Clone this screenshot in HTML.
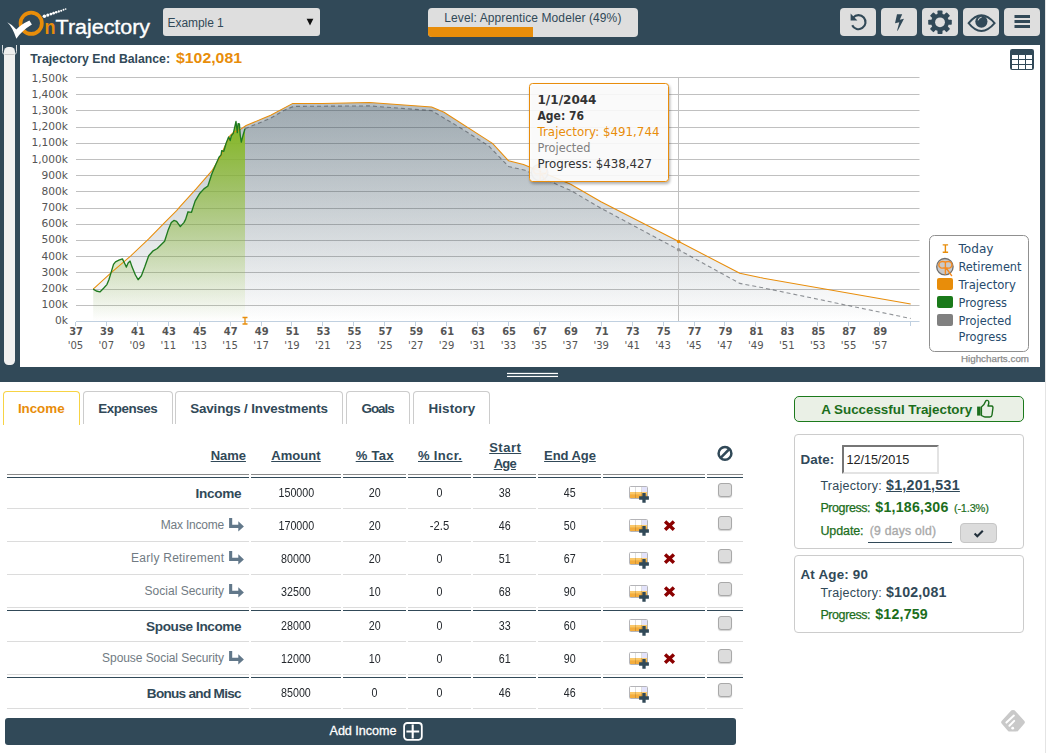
<!DOCTYPE html>
<html lang="en">
<head>
<meta charset="utf-8">
<title>OnTrajectory</title>
<style>
html,body{margin:0;padding:0;}
body{width:1046px;height:753px;overflow:hidden;background:#fff;position:relative;
  font-family:"Liberation Sans",sans-serif;color:#314958;font-size:13px;}
.abs{position:absolute;}
.t{position:absolute;white-space:nowrap;line-height:1;}
#hdr{left:0;top:0;width:1046px;height:382px;background:#314958;}
#panel{left:20px;top:45px;width:1020px;height:322px;background:#fff;}
#edge{left:1045px;top:0;width:1px;height:753px;background:#e4e4e4;}
.hbtn{position:absolute;top:8px;width:36px;height:28px;background:#dedede;border-radius:4px;}
#sel{left:163px;top:8px;width:157px;height:28px;background:#dedede;border-radius:3px;}
#lvl{left:428px;top:8px;width:210px;height:29px;background:#dedede;border-radius:4px;overflow:hidden;}
#lvl i{position:absolute;left:0;top:19px;width:105px;height:10px;background:#e88d0a;}
/* tabs */
.tab{position:absolute;top:391px;height:33px;border:1px solid #ccc;border-bottom:none;border-radius:4px 4px 0 0;background:#fff;box-sizing:border-box;}
.tab span{position:absolute;left:0;right:0;top:10px;text-align:center;font-weight:bold;font-size:13.4px;line-height:16px;white-space:nowrap;}
/* table */
.hl{position:absolute;height:1px;}
.num{position:absolute;text-align:center;font-size:11.5px;letter-spacing:-0.35px;line-height:14px;color:#333;white-space:nowrap;}
.nm{position:absolute;text-align:right;white-space:nowrap;line-height:16px;}
.nm.b{font-weight:bold;font-size:13.6px;color:#314958;}
.nm.s{font-size:12px;color:#777;}
.th{position:absolute;text-align:center;font-weight:bold;font-size:13.2px;line-height:16px;text-decoration:underline;white-space:nowrap;color:#314958;}
.cb{position:absolute;left:718px;width:12px;height:12px;border:1px solid #a9a9a9;border-radius:3px;background:#dcdcdc;box-shadow:0 1px 1px rgba(0,0,0,.18);}
.box{position:absolute;left:794px;width:228px;border:1px solid #ccc;border-radius:4px;background:#fff;}
</style>
</head>
<body>
<div id="hdr" class="abs"></div>
<div id="panel" class="abs"></div>
<svg class="abs" style="left:0;top:0" width="1046" height="382" viewBox="0 0 1046 382">
<defs>
<linearGradient id="gT" x1="0" y1="77" x2="0" y2="321.5" gradientUnits="userSpaceOnUse"><stop offset="0" stop-color="#314958" stop-opacity=".40"/><stop offset="1" stop-color="#314958" stop-opacity="0"/></linearGradient>
<linearGradient id="gJ" x1="0" y1="77" x2="0" y2="321.5" gradientUnits="userSpaceOnUse"><stop offset="0" stop-color="#314958" stop-opacity=".20"/><stop offset="1" stop-color="#314958" stop-opacity="0"/></linearGradient>
<linearGradient id="gP" x1="0" y1="77" x2="0" y2="321.5" gradientUnits="userSpaceOnUse"><stop offset="0" stop-color="#82b71c" stop-opacity="1"/><stop offset=".25" stop-color="#88b82c" stop-opacity=".96"/><stop offset="1" stop-color="#8fb848" stop-opacity="0"/></linearGradient>
<filter id="sh" x="-10%" y="-10%" width="120%" height="125%"><feGaussianBlur in="SourceAlpha" stdDeviation="1.6"/><feOffset dx="1" dy="1.5"/><feComponentTransfer><feFuncA type="linear" slope=".35"/></feComponentTransfer><feMerge><feMergeNode/><feMergeNode in="SourceGraphic"/></feMerge></filter>
</defs>
<path d="M76 305.5H919.5" stroke="#c0c0c0" stroke-width="1"/>
<path d="M76 289.5H919.5" stroke="#c0c0c0" stroke-width="1"/>
<path d="M76 272.5H919.5" stroke="#c0c0c0" stroke-width="1"/>
<path d="M76 256.5H919.5" stroke="#c0c0c0" stroke-width="1"/>
<path d="M76 240.5H919.5" stroke="#c0c0c0" stroke-width="1"/>
<path d="M76 224.5H919.5" stroke="#c0c0c0" stroke-width="1"/>
<path d="M76 208.5H919.5" stroke="#c0c0c0" stroke-width="1"/>
<path d="M76 191.5H919.5" stroke="#c0c0c0" stroke-width="1"/>
<path d="M76 175.5H919.5" stroke="#c0c0c0" stroke-width="1"/>
<path d="M76 159.5H919.5" stroke="#c0c0c0" stroke-width="1"/>
<path d="M76 143.5H919.5" stroke="#c0c0c0" stroke-width="1"/>
<path d="M76 127.5H919.5" stroke="#c0c0c0" stroke-width="1"/>
<path d="M76 110.5H919.5" stroke="#c0c0c0" stroke-width="1"/>
<path d="M76 94.5H919.5" stroke="#c0c0c0" stroke-width="1"/>
<path d="M76 77.5H919.5" stroke="#c0c0c0" stroke-width="1"/>
<polygon points="93.2,289.2 111.5,272.4 130.8,255.8 148.7,238.9 164.6,222.6 176.6,210.7 180.0,206.7 195.9,189.2 211.8,170.9 220.7,156.3 224.6,146.7 230.0,135.7 233.5,132.3 240.4,129.4 246.1,125.5 262.8,118.6 270.7,115.3 292.4,103.6 322.2,103.4 369.4,102.4 431.6,106.9 444.0,112.3 492.5,143.4 508.6,160.8 523.5,164.5 540.4,171.6 570.7,184.2 601.0,201.8 678.7,241.5 739.8,273.3 760.0,277.6 910.7,304.0 910.7,321.5 93.2,321.5" fill="url(#gT)"/>
<polygon points="245.0,128.7 262.8,121.5 270.0,118.6 284.9,109.9 293.6,106.4 369.4,105.9 431.6,110.6 461.4,128.5 488.7,145.9 508.6,166.5 525.2,170.3 570.7,190.5 601.0,208.2 678.7,249.8 739.8,283.4 760.0,287.2 910.7,318.5 910.7,321.5 245.0,321.5" fill="url(#gJ)"/>
<polygon points="93.2,289.2 96.3,291.0 99.9,291.9 103.6,288.3 106.9,284.6 108.9,279.7 111.5,271.1 113.5,264.4 115.5,261.8 118.9,260.2 122.4,258.9 124.8,263.8 126.4,267.1 128.1,263.1 130.1,261.1 132.1,267.1 135.4,275.0 138.1,279.7 141.4,275.7 144.7,267.1 148.7,255.8 152.7,251.2 157.3,248.5 164.6,241.2 168.0,230.6 171.3,222.6 173.9,220.4 176.6,221.3 180.3,226.6 183.9,222.6 185.6,219.4 188.0,211.8 191.5,212.3 195.1,201.1 199.9,193.2 203.9,188.9 207.9,186.0 211.8,174.0 215.8,164.5 219.0,157.3 221.1,154.9 221.7,150.6 223.8,151.3 226.2,143.0 228.6,136.9 230.2,140.6 231.3,135.8 233.3,133.4 234.9,126.3 236.0,121.5 237.3,132.6 238.1,123.6 239.4,123.9 240.2,135.0 241.3,142.2 242.9,135.8 245.0,128.7 245.0,321.5 93.2,321.5" fill="url(#gP)"/>
<polyline points="93.2,289.2 111.5,272.4 130.8,255.8 148.7,238.9 164.6,222.6 176.6,210.7 180.0,206.7 195.9,189.2 211.8,170.9 220.7,156.3 224.6,146.7 230.0,135.7 233.5,132.3 240.4,129.4 246.1,125.5 262.8,118.6 270.7,115.3 292.4,103.6 322.2,103.4 369.4,102.4 431.6,106.9 444.0,112.3 492.5,143.4 508.6,160.8 523.5,164.5 540.4,171.6 570.7,184.2 601.0,201.8 678.7,241.5 739.8,273.3 760.0,277.6 910.7,304.0" fill="none" stroke="#e88d0a" stroke-width="1.05" stroke-linejoin="round"/>
<polyline points="245.0,128.7 262.8,121.5 270.0,118.6 284.9,109.9 293.6,106.4 369.4,105.9 431.6,110.6 461.4,128.5 488.7,145.9 508.6,166.5 525.2,170.3 570.7,190.5 601.0,208.2 678.7,249.8 739.8,283.4 760.0,287.2 910.7,318.5" fill="none" stroke="#4a4f55" stroke-opacity=".6" stroke-width="1.1" stroke-dasharray="4 3"/>
<polyline points="93.2,289.2 96.3,291.0 99.9,291.9 103.6,288.3 106.9,284.6 108.9,279.7 111.5,271.1 113.5,264.4 115.5,261.8 118.9,260.2 122.4,258.9 124.8,263.8 126.4,267.1 128.1,263.1 130.1,261.1 132.1,267.1 135.4,275.0 138.1,279.7 141.4,275.7 144.7,267.1 148.7,255.8 152.7,251.2 157.3,248.5 164.6,241.2 168.0,230.6 171.3,222.6 173.9,220.4 176.6,221.3 180.3,226.6 183.9,222.6 185.6,219.4 188.0,211.8 191.5,212.3 195.1,201.1 199.9,193.2 203.9,188.9 207.9,186.0 211.8,174.0 215.8,164.5 219.0,157.3 221.1,154.9 221.7,150.6 223.8,151.3 226.2,143.0 228.6,136.9 230.2,140.6 231.3,135.8 233.3,133.4 234.9,126.3 236.0,121.5 237.3,132.6 238.1,123.6 239.4,123.9 240.2,135.0 241.3,142.2 242.9,135.8 245.0,128.7" fill="none" stroke="#1f7a1f" stroke-width="1.35" stroke-linejoin="round"/>
<path d="M76 321.5H919.5" stroke="#c0d0e0" stroke-width="1"/>
<path d="M75.5 322V326M106.5 322V326M137.5 322V326M168.5 322V326M199.5 322V326M230.5 322V326M261.5 322V326M291.5 322V326M322.5 322V326M353.5 322V326M384.5 322V326M415.5 322V326M446.5 322V326M477.5 322V326M508.5 322V326M539.5 322V326M570.5 322V326M601.5 322V326M632.5 322V326M663.5 322V326M694.5 322V326M724.5 322V326M755.5 322V326M786.5 322V326M817.5 322V326M848.5 322V326M879.5 322V326M910.5 322V326" stroke="#c0d0e0" stroke-width="1"/>
<path d="M678.5 77V321" stroke="#c0c0c0" stroke-width="1"/>
<circle cx="678.6" cy="241.5" r="1.8" fill="#e88d0a"/><circle cx="678.6" cy="249.8" r="1.8" fill="#999"/>
<g font-family="DejaVu Sans, Liberation Sans, sans-serif" font-size="11" fill="#555" text-anchor="end">
<text x="68" y="324" textLength="13" lengthAdjust="spacingAndGlyphs">0k</text>
<text x="68" y="308" textLength="26.5" lengthAdjust="spacingAndGlyphs">100k</text>
<text x="68" y="292" textLength="26.5" lengthAdjust="spacingAndGlyphs">200k</text>
<text x="68" y="276" textLength="26.5" lengthAdjust="spacingAndGlyphs">300k</text>
<text x="68" y="260" textLength="26.5" lengthAdjust="spacingAndGlyphs">400k</text>
<text x="68" y="243" textLength="26.5" lengthAdjust="spacingAndGlyphs">500k</text>
<text x="68" y="227" textLength="26.5" lengthAdjust="spacingAndGlyphs">600k</text>
<text x="68" y="211" textLength="26.5" lengthAdjust="spacingAndGlyphs">700k</text>
<text x="68" y="195" textLength="26.5" lengthAdjust="spacingAndGlyphs">800k</text>
<text x="68" y="179" textLength="26.5" lengthAdjust="spacingAndGlyphs">900k</text>
<text x="68" y="163" textLength="36.6" lengthAdjust="spacingAndGlyphs">1,000k</text>
<text x="68" y="146" textLength="36.6" lengthAdjust="spacingAndGlyphs">1,100k</text>
<text x="68" y="130" textLength="36.6" lengthAdjust="spacingAndGlyphs">1,200k</text>
<text x="68" y="114" textLength="36.6" lengthAdjust="spacingAndGlyphs">1,300k</text>
<text x="68" y="98" textLength="36.6" lengthAdjust="spacingAndGlyphs">1,400k</text>
<text x="68" y="82" textLength="36.6" lengthAdjust="spacingAndGlyphs">1,500k</text>
</g>
<g font-family="DejaVu Sans, Liberation Sans, sans-serif" font-size="11" fill="#555" text-anchor="middle">
<text x="76.1" y="335.2" font-weight="bold" textLength="13.8" lengthAdjust="spacingAndGlyphs">37</text><text x="75.5" y="349.2" textLength="15.6" lengthAdjust="spacingAndGlyphs">&#39;05</text>
<text x="107.0" y="335.2" font-weight="bold" textLength="13.8" lengthAdjust="spacingAndGlyphs">39</text><text x="106.4" y="349.2" textLength="15.6" lengthAdjust="spacingAndGlyphs">&#39;07</text>
<text x="138.0" y="335.2" font-weight="bold" textLength="13.8" lengthAdjust="spacingAndGlyphs">41</text><text x="137.4" y="349.2" textLength="15.6" lengthAdjust="spacingAndGlyphs">&#39;09</text>
<text x="168.9" y="335.2" font-weight="bold" textLength="13.8" lengthAdjust="spacingAndGlyphs">43</text><text x="168.3" y="349.2" textLength="15.6" lengthAdjust="spacingAndGlyphs">&#39;11</text>
<text x="199.8" y="335.2" font-weight="bold" textLength="13.8" lengthAdjust="spacingAndGlyphs">45</text><text x="199.2" y="349.2" textLength="15.6" lengthAdjust="spacingAndGlyphs">&#39;13</text>
<text x="230.7" y="335.2" font-weight="bold" textLength="13.8" lengthAdjust="spacingAndGlyphs">47</text><text x="230.1" y="349.2" textLength="15.6" lengthAdjust="spacingAndGlyphs">&#39;15</text>
<text x="261.7" y="335.2" font-weight="bold" textLength="13.8" lengthAdjust="spacingAndGlyphs">49</text><text x="261.1" y="349.2" textLength="15.6" lengthAdjust="spacingAndGlyphs">&#39;17</text>
<text x="292.6" y="335.2" font-weight="bold" textLength="13.8" lengthAdjust="spacingAndGlyphs">51</text><text x="292.0" y="349.2" textLength="15.6" lengthAdjust="spacingAndGlyphs">&#39;19</text>
<text x="323.5" y="335.2" font-weight="bold" textLength="13.8" lengthAdjust="spacingAndGlyphs">53</text><text x="322.9" y="349.2" textLength="15.6" lengthAdjust="spacingAndGlyphs">&#39;21</text>
<text x="354.4" y="335.2" font-weight="bold" textLength="13.8" lengthAdjust="spacingAndGlyphs">55</text><text x="353.8" y="349.2" textLength="15.6" lengthAdjust="spacingAndGlyphs">&#39;23</text>
<text x="385.4" y="335.2" font-weight="bold" textLength="13.8" lengthAdjust="spacingAndGlyphs">57</text><text x="384.8" y="349.2" textLength="15.6" lengthAdjust="spacingAndGlyphs">&#39;25</text>
<text x="416.3" y="335.2" font-weight="bold" textLength="13.8" lengthAdjust="spacingAndGlyphs">59</text><text x="415.7" y="349.2" textLength="15.6" lengthAdjust="spacingAndGlyphs">&#39;27</text>
<text x="447.2" y="335.2" font-weight="bold" textLength="13.8" lengthAdjust="spacingAndGlyphs">61</text><text x="446.6" y="349.2" textLength="15.6" lengthAdjust="spacingAndGlyphs">&#39;29</text>
<text x="478.1" y="335.2" font-weight="bold" textLength="13.8" lengthAdjust="spacingAndGlyphs">63</text><text x="477.5" y="349.2" textLength="15.6" lengthAdjust="spacingAndGlyphs">&#39;31</text>
<text x="509.1" y="335.2" font-weight="bold" textLength="13.8" lengthAdjust="spacingAndGlyphs">65</text><text x="508.5" y="349.2" textLength="15.6" lengthAdjust="spacingAndGlyphs">&#39;33</text>
<text x="540.0" y="335.2" font-weight="bold" textLength="13.8" lengthAdjust="spacingAndGlyphs">67</text><text x="539.4" y="349.2" textLength="15.6" lengthAdjust="spacingAndGlyphs">&#39;35</text>
<text x="570.9" y="335.2" font-weight="bold" textLength="13.8" lengthAdjust="spacingAndGlyphs">69</text><text x="570.3" y="349.2" textLength="15.6" lengthAdjust="spacingAndGlyphs">&#39;37</text>
<text x="601.8" y="335.2" font-weight="bold" textLength="13.8" lengthAdjust="spacingAndGlyphs">71</text><text x="601.2" y="349.2" textLength="15.6" lengthAdjust="spacingAndGlyphs">&#39;39</text>
<text x="632.8" y="335.2" font-weight="bold" textLength="13.8" lengthAdjust="spacingAndGlyphs">73</text><text x="632.2" y="349.2" textLength="15.6" lengthAdjust="spacingAndGlyphs">&#39;41</text>
<text x="663.7" y="335.2" font-weight="bold" textLength="13.8" lengthAdjust="spacingAndGlyphs">75</text><text x="663.1" y="349.2" textLength="15.6" lengthAdjust="spacingAndGlyphs">&#39;43</text>
<text x="694.6" y="335.2" font-weight="bold" textLength="13.8" lengthAdjust="spacingAndGlyphs">77</text><text x="694.0" y="349.2" textLength="15.6" lengthAdjust="spacingAndGlyphs">&#39;45</text>
<text x="725.5" y="335.2" font-weight="bold" textLength="13.8" lengthAdjust="spacingAndGlyphs">79</text><text x="724.9" y="349.2" textLength="15.6" lengthAdjust="spacingAndGlyphs">&#39;47</text>
<text x="756.5" y="335.2" font-weight="bold" textLength="13.8" lengthAdjust="spacingAndGlyphs">81</text><text x="755.9" y="349.2" textLength="15.6" lengthAdjust="spacingAndGlyphs">&#39;49</text>
<text x="787.4" y="335.2" font-weight="bold" textLength="13.8" lengthAdjust="spacingAndGlyphs">83</text><text x="786.8" y="349.2" textLength="15.6" lengthAdjust="spacingAndGlyphs">&#39;51</text>
<text x="818.3" y="335.2" font-weight="bold" textLength="13.8" lengthAdjust="spacingAndGlyphs">85</text><text x="817.7" y="349.2" textLength="15.6" lengthAdjust="spacingAndGlyphs">&#39;53</text>
<text x="849.2" y="335.2" font-weight="bold" textLength="13.8" lengthAdjust="spacingAndGlyphs">87</text><text x="848.6" y="349.2" textLength="15.6" lengthAdjust="spacingAndGlyphs">&#39;55</text>
<text x="880.2" y="335.2" font-weight="bold" textLength="13.8" lengthAdjust="spacingAndGlyphs">89</text><text x="879.6" y="349.2" textLength="15.6" lengthAdjust="spacingAndGlyphs">&#39;57</text>
</g>
<path d="M242.5 317.5h5M245 317.5v6.5M242.5 324h5" stroke="#e88d0a" stroke-width="1.3" fill="none"/>
<g opacity=".7" transform="translate(-405.2 -94.2)"><circle cx="944.9" cy="266.7" r="8.2" fill="#c9c9c9" stroke="#6e6e6e" stroke-width="1.3"/><path d="M945.4 262V274M945.4 262C941 260.5 938.8 262.5 938.8 265C938.8 267.8 942 268.8 945.4 267.6M945.4 262C949.8 260.5 952 262.5 952 265C952 267.8 949 268.8 945.4 267.6M946.2 268L951.6 275.6" fill="none" stroke="#f58a1f" stroke-width="1.4" stroke-linecap="round"/></g>
<g filter="url(#sh)"><rect x="529.5" y="83.5" width="139" height="98" rx="3" fill="#fff" fill-opacity=".86" stroke="#e88d0a" stroke-width="1"/></g>
<g font-family="DejaVu Sans, Liberation Sans, sans-serif" font-size="12" fill="#333">
<text x="537.5" y="104" font-weight="bold" textLength="59" lengthAdjust="spacingAndGlyphs">1/1/2044</text>
<text x="537.5" y="120" font-weight="bold" textLength="46.5" lengthAdjust="spacingAndGlyphs">Age: 76</text>
<text x="537.5" y="136" fill="#e88d0a" textLength="122" lengthAdjust="spacingAndGlyphs">Trajectory: $491,744</text>
<text x="537.5" y="152" fill="#808080" textLength="53" lengthAdjust="spacingAndGlyphs">Projected</text>
<text x="537.5" y="168" textLength="114.5" lengthAdjust="spacingAndGlyphs">Progress: $438,427</text>
</g>
<rect x="929.5" y="235.5" width="99" height="116" rx="5" fill="#fff" stroke="#909090" stroke-width="1"/>
<path d="M942.7 244.9h5.4M945.4 244.9v7.4M942.7 252.3h5.4" stroke="#e88d0a" stroke-width="1.4" fill="none"/>
<circle cx="944.9" cy="266.7" r="8.2" fill="#c9c9c9" stroke="#6e6e6e" stroke-width="1.3"/><path d="M945.4 262V274M945.4 262C941 260.5 938.8 262.5 938.8 265C938.8 267.8 942 268.8 945.4 267.6M945.4 262C949.8 260.5 952 262.5 952 265C952 267.8 949 268.8 945.4 267.6M946.2 268L951.6 275.6" fill="none" stroke="#f58a1f" stroke-width="1.4" stroke-linecap="round"/>
<rect x="937" y="278" width="16" height="12" rx="2" fill="#e88d0a"/>
<rect x="937" y="296" width="16" height="12" rx="2" fill="#1a7a1a"/>
<rect x="937" y="314" width="16" height="12" rx="2" fill="#808080"/>
<g font-family="DejaVu Sans, Liberation Sans, sans-serif" font-size="12" fill="#274b6d">
<text x="958.5" y="253" textLength="35" lengthAdjust="spacingAndGlyphs">Today</text>
<text x="958.5" y="271" textLength="63" lengthAdjust="spacingAndGlyphs">Retirement</text>
<text x="958.5" y="289" textLength="57.5" lengthAdjust="spacingAndGlyphs">Trajectory</text>
<text x="958.5" y="307" textLength="48.5" lengthAdjust="spacingAndGlyphs">Progress</text>
<text x="958.5" y="325" textLength="53" lengthAdjust="spacingAndGlyphs">Projected</text>
<text x="958.5" y="341" textLength="48.5" lengthAdjust="spacingAndGlyphs">Progress</text>
</g>
<text x="1029" y="362" font-family="Liberation Sans, sans-serif" font-size="9.8" fill="#8a8a8a" stroke="#8a8a8a" stroke-width=".25" text-anchor="end">Highcharts.com</text>
<text x="30.3" y="63" font-family="Liberation Sans, sans-serif" font-size="12.6" font-weight="bold" fill="#314958" textLength="139.7" lengthAdjust="spacingAndGlyphs">Trajectory End Balance:</text>
<text x="176" y="63" font-family="Liberation Sans, sans-serif" font-size="14.5" font-weight="bold" fill="#e88d0a" textLength="66" lengthAdjust="spacingAndGlyphs">$102,081</text>
<g><rect x="1010" y="49" width="24" height="21" rx="2.2" fill="#314958"/><rect x="1012" y="55" width="6" height="4" fill="#fff"/><rect x="1012" y="60" width="6" height="4" fill="#fff"/><rect x="1012" y="65" width="6" height="4" fill="#fff"/><rect x="1019" y="55" width="6" height="4" fill="#fff"/><rect x="1019" y="60" width="6" height="4" fill="#fff"/><rect x="1019" y="65" width="6" height="4" fill="#fff"/><rect x="1026" y="55" width="6" height="4" fill="#fff"/><rect x="1026" y="60" width="6" height="4" fill="#fff"/><rect x="1026" y="65" width="6" height="4" fill="#fff"/></g>
<rect x="507" y="372.85" width="51" height="1.25" fill="#fff"/><rect x="507" y="375.85" width="51" height="1.2" fill="#fff"/>
<rect x="4" y="47" width="11" height="318" rx="4.5" fill="#f0f0f0"/><path d="M2.5 45v6.5q0 3 2.5 3h9q2.5 0 2.5-3V45" fill="none" stroke="#d8dde0" stroke-width="1"/><path d="M5 54.5h9" stroke="#c8c8c8" stroke-width="1"/>
</svg>
<!-- logo -->
<svg class="abs" style="left:0;top:0" width="160" height="45" viewBox="0 0 160 45">
<circle cx="31.2" cy="23.3" r="10.65" fill="none" stroke="#e88d0a" stroke-width="3.7"/>
<path d="M7.3 22.2Q12.5 27 16.4 38.8Q21 31 31.9 24.4L29.4 20.6Q21 24.5 16.3 29.6Q12.5 24.5 7.3 22.2Z" fill="#fff"/>
<g fill="#fff"><circle cx="44.4" cy="16.3" r="1.8"/><circle cx="47.8" cy="15.1" r="1.6"/><circle cx="50.9" cy="14.1" r="1.45"/><circle cx="53.6" cy="13.2" r="1.35"/><circle cx="56.2" cy="12.3" r="1.25"/><circle cx="58.8" cy="11.5" r="1.15"/><circle cx="61.2" cy="10.7" r="1.05"/><circle cx="63.5" cy="9.8" r="0.95"/><circle cx="65.6" cy="9.0" r="0.85"/></g>
<text x="44.4" y="33.6" font-family="Liberation Sans, sans-serif" font-size="19.5" font-weight="bold" fill="#e88d0a" textLength="11" lengthAdjust="spacingAndGlyphs">n</text>
<text x="55.6" y="33.6" font-family="Liberation Sans, sans-serif" font-size="19.5" fill="#fff" stroke="#fff" stroke-width=".35" textLength="94.5" lengthAdjust="spacingAndGlyphs">Trajectory</text>
</svg>
<!-- select -->
<div id="sel" class="abs"><span class="t" style="left:4.5px;top:8.5px;font-size:12px;letter-spacing:-.05px;color:#314958">Example 1</span>
<svg class="abs" style="left:143px;top:10px" width="8" height="8" viewBox="0 0 8 8"><path d="M0.6 0.8h6.8L4 7.4z" fill="#111"/></svg></div>
<!-- level -->
<div id="lvl" class="abs"><i></i><span class="t" style="left:16.3px;top:3.5px;font-size:12px;color:#314958;letter-spacing:.1px">Level: Apprentice Modeler (49%)</span></div>
<!-- buttons -->
<div class="hbtn" style="left:840px"><svg width="36" height="28" viewBox="0 0 36 28"><path d="M13.2 9.6A7 7 0 1 1 12.2 17.2" fill="none" stroke="#314958" stroke-width="2.1"/><path d="M10.6 5.6V12.4H17.4z" fill="#314958"/></svg></div>
<div class="hbtn" style="left:881px"><svg width="36" height="28" viewBox="0 0 36 28"><path d="M16 6.2h5.2l-2.4 5.6 4.2-1-6.3 12-.6-.3 2.2-8.3-4.3 1.1z" fill="#314958"/></svg></div>
<div class="hbtn" style="left:922px"><svg width="36" height="28" viewBox="0 0 36 28"><g transform="translate(18 14.3)"><g fill="#314958"><rect x="-2.5" y="-11.8" width="5" height="23.6" rx=".8"/><rect x="-2.5" y="-11.8" width="5" height="23.6" rx=".8" transform="rotate(45)"/><rect x="-2.5" y="-11.8" width="5" height="23.6" rx=".8" transform="rotate(90)"/><rect x="-2.5" y="-11.8" width="5" height="23.6" rx=".8" transform="rotate(135)"/><circle r="8.9"/></g><circle r="4.9" fill="#dedede"/></g></svg></div>
<div class="hbtn" style="left:963px"><svg width="36" height="28" viewBox="0 0 36 28"><path d="M5.6 15.2Q12 7.3 18.4 7.3T31.6 15.2Q25 23 18.4 23T5.6 15.2Z" fill="#dedede" stroke="#314958" stroke-width="1.9"/><circle cx="18.4" cy="13.6" r="6.1" fill="#314958"/><path d="M15.2 12.4A3.6 3.6 0 0 1 18.6 9.3" fill="none" stroke="#dedede" stroke-width="1"/></svg></div>
<div class="hbtn" style="left:1004px"><svg width="36" height="28" viewBox="0 0 36 28"><path d="M10.5 8.5h15.5M10.5 13.5h15.5M10.5 18.5h15.5" stroke="#314958" stroke-width="2.8"/></svg></div>

<div class="tab" style="left:3px;width:77px;height:34px;border-color:#f7d344"></div>
<div class="tab" style="left:83px;width:90px"></div>
<div class="tab" style="left:175px;width:168px"></div>
<div class="tab" style="left:346px;width:64px"></div>
<div class="tab" style="left:413px;width:77px"></div>
<div class="hl" style="left:7px;top:474px;width:242px;background:#8a8a8a"></div>
<div class="hl" style="left:251px;top:474px;width:90px;background:#8a8a8a"></div>
<div class="hl" style="left:343px;top:474px;width:63px;background:#8a8a8a"></div>
<div class="hl" style="left:408px;top:474px;width:63px;background:#8a8a8a"></div>
<div class="hl" style="left:473px;top:474px;width:63px;background:#8a8a8a"></div>
<div class="hl" style="left:538px;top:474px;width:63px;background:#8a8a8a"></div>
<div class="hl" style="left:603px;top:474px;width:102px;background:#8a8a8a"></div>
<div class="hl" style="left:707px;top:474px;width:36px;background:#8a8a8a"></div>
<div class="hl" style="left:7px;top:477px;width:242px;background:#314958"></div>
<div class="hl" style="left:251px;top:477px;width:90px;background:#314958"></div>
<div class="hl" style="left:343px;top:477px;width:63px;background:#314958"></div>
<div class="hl" style="left:408px;top:477px;width:63px;background:#314958"></div>
<div class="hl" style="left:473px;top:477px;width:63px;background:#314958"></div>
<div class="hl" style="left:538px;top:477px;width:63px;background:#314958"></div>
<div class="hl" style="left:603px;top:477px;width:102px;background:#314958"></div>
<div class="hl" style="left:707px;top:477px;width:36px;background:#314958"></div>
<div class="hl" style="left:7px;top:508px;width:242px;background:#dcdcdc"></div>
<div class="hl" style="left:251px;top:508px;width:90px;background:#dcdcdc"></div>
<div class="hl" style="left:343px;top:508px;width:63px;background:#dcdcdc"></div>
<div class="hl" style="left:408px;top:508px;width:63px;background:#dcdcdc"></div>
<div class="hl" style="left:473px;top:508px;width:63px;background:#dcdcdc"></div>
<div class="hl" style="left:538px;top:508px;width:63px;background:#dcdcdc"></div>
<div class="hl" style="left:603px;top:508px;width:102px;background:#dcdcdc"></div>
<div class="hl" style="left:707px;top:508px;width:36px;background:#dcdcdc"></div>
<svg class="abs" style="left:629px;top:486px" width="21" height="18" viewBox="0 0 21 18"><rect x=".5" y=".5" width="18" height="12" rx="1" fill="#fff" stroke="#b4b4b8"/><rect x="13" y="1" width="5" height="5" fill="#e3e3fb"/><rect x="1" y="6" width="17" height="6" fill="#f4ad3d"/><rect x="1" y="6" width="17" height="2.4" fill="#fbc868"/><path d="M6.5 1v11M12.5 1v11" stroke="#000" stroke-opacity=".13" stroke-width="1"/><path d="M15 7v9.8M10.1 12h9.8" stroke="#314958" stroke-width="3.3"/></svg>
<div class="cb" style="top:483px"></div>
<div class="hl" style="left:7px;top:541px;width:242px;background:#dcdcdc"></div>
<div class="hl" style="left:251px;top:541px;width:90px;background:#dcdcdc"></div>
<div class="hl" style="left:343px;top:541px;width:63px;background:#dcdcdc"></div>
<div class="hl" style="left:408px;top:541px;width:63px;background:#dcdcdc"></div>
<div class="hl" style="left:473px;top:541px;width:63px;background:#dcdcdc"></div>
<div class="hl" style="left:538px;top:541px;width:63px;background:#dcdcdc"></div>
<div class="hl" style="left:603px;top:541px;width:102px;background:#dcdcdc"></div>
<div class="hl" style="left:707px;top:541px;width:36px;background:#dcdcdc"></div>
<svg class="abs" style="left:228px;top:517px" width="17" height="16" viewBox="0 0 17 16"><path d="M1.1 0.9h3.1v6.8h6.1v-3.4l5.6 5.1-5.6 5.1v-3.6h-9.2z" fill="#62788a"/></svg>
<svg class="abs" style="left:629px;top:519px" width="21" height="18" viewBox="0 0 21 18"><rect x=".5" y=".5" width="18" height="12" rx="1" fill="#fff" stroke="#b4b4b8"/><rect x="13" y="1" width="5" height="5" fill="#e3e3fb"/><rect x="1" y="6" width="17" height="6" fill="#f4ad3d"/><rect x="1" y="6" width="17" height="2.4" fill="#fbc868"/><path d="M6.5 1v11M12.5 1v11" stroke="#000" stroke-opacity=".13" stroke-width="1"/><path d="M15 7v9.8M10.1 12h9.8" stroke="#314958" stroke-width="3.3"/></svg>
<svg class="abs" style="left:663px;top:520px" width="13" height="13" viewBox="0 0 13 13"><path d="M2.1 1.6l8.8 8.2M10.9 1.6l-8.8 8.2" stroke="#8b0000" stroke-width="3.4" stroke-linecap="butt"/></svg>
<div class="cb" style="top:516px"></div>
<div class="hl" style="left:7px;top:574px;width:242px;background:#dcdcdc"></div>
<div class="hl" style="left:251px;top:574px;width:90px;background:#dcdcdc"></div>
<div class="hl" style="left:343px;top:574px;width:63px;background:#dcdcdc"></div>
<div class="hl" style="left:408px;top:574px;width:63px;background:#dcdcdc"></div>
<div class="hl" style="left:473px;top:574px;width:63px;background:#dcdcdc"></div>
<div class="hl" style="left:538px;top:574px;width:63px;background:#dcdcdc"></div>
<div class="hl" style="left:603px;top:574px;width:102px;background:#dcdcdc"></div>
<div class="hl" style="left:707px;top:574px;width:36px;background:#dcdcdc"></div>
<svg class="abs" style="left:228px;top:550px" width="17" height="16" viewBox="0 0 17 16"><path d="M1.1 0.9h3.1v6.8h6.1v-3.4l5.6 5.1-5.6 5.1v-3.6h-9.2z" fill="#62788a"/></svg>
<svg class="abs" style="left:629px;top:552px" width="21" height="18" viewBox="0 0 21 18"><rect x=".5" y=".5" width="18" height="12" rx="1" fill="#fff" stroke="#b4b4b8"/><rect x="13" y="1" width="5" height="5" fill="#e3e3fb"/><rect x="1" y="6" width="17" height="6" fill="#f4ad3d"/><rect x="1" y="6" width="17" height="2.4" fill="#fbc868"/><path d="M6.5 1v11M12.5 1v11" stroke="#000" stroke-opacity=".13" stroke-width="1"/><path d="M15 7v9.8M10.1 12h9.8" stroke="#314958" stroke-width="3.3"/></svg>
<svg class="abs" style="left:663px;top:553px" width="13" height="13" viewBox="0 0 13 13"><path d="M2.1 1.6l8.8 8.2M10.9 1.6l-8.8 8.2" stroke="#8b0000" stroke-width="3.4" stroke-linecap="butt"/></svg>
<div class="cb" style="top:549px"></div>
<div class="hl" style="left:7px;top:607px;width:242px;background:#dcdcdc"></div>
<div class="hl" style="left:251px;top:607px;width:90px;background:#dcdcdc"></div>
<div class="hl" style="left:343px;top:607px;width:63px;background:#dcdcdc"></div>
<div class="hl" style="left:408px;top:607px;width:63px;background:#dcdcdc"></div>
<div class="hl" style="left:473px;top:607px;width:63px;background:#dcdcdc"></div>
<div class="hl" style="left:538px;top:607px;width:63px;background:#dcdcdc"></div>
<div class="hl" style="left:603px;top:607px;width:102px;background:#dcdcdc"></div>
<div class="hl" style="left:707px;top:607px;width:36px;background:#dcdcdc"></div>
<svg class="abs" style="left:228px;top:583px" width="17" height="16" viewBox="0 0 17 16"><path d="M1.1 0.9h3.1v6.8h6.1v-3.4l5.6 5.1-5.6 5.1v-3.6h-9.2z" fill="#62788a"/></svg>
<svg class="abs" style="left:629px;top:585px" width="21" height="18" viewBox="0 0 21 18"><rect x=".5" y=".5" width="18" height="12" rx="1" fill="#fff" stroke="#b4b4b8"/><rect x="13" y="1" width="5" height="5" fill="#e3e3fb"/><rect x="1" y="6" width="17" height="6" fill="#f4ad3d"/><rect x="1" y="6" width="17" height="2.4" fill="#fbc868"/><path d="M6.5 1v11M12.5 1v11" stroke="#000" stroke-opacity=".13" stroke-width="1"/><path d="M15 7v9.8M10.1 12h9.8" stroke="#314958" stroke-width="3.3"/></svg>
<svg class="abs" style="left:663px;top:586px" width="13" height="13" viewBox="0 0 13 13"><path d="M2.1 1.6l8.8 8.2M10.9 1.6l-8.8 8.2" stroke="#8b0000" stroke-width="3.4" stroke-linecap="butt"/></svg>
<div class="cb" style="top:582px"></div>
<div class="hl" style="left:7px;top:610px;width:242px;background:#314958"></div>
<div class="hl" style="left:251px;top:610px;width:90px;background:#314958"></div>
<div class="hl" style="left:343px;top:610px;width:63px;background:#314958"></div>
<div class="hl" style="left:408px;top:610px;width:63px;background:#314958"></div>
<div class="hl" style="left:473px;top:610px;width:63px;background:#314958"></div>
<div class="hl" style="left:538px;top:610px;width:63px;background:#314958"></div>
<div class="hl" style="left:603px;top:610px;width:102px;background:#314958"></div>
<div class="hl" style="left:707px;top:610px;width:36px;background:#314958"></div>
<div class="hl" style="left:7px;top:641px;width:242px;background:#dcdcdc"></div>
<div class="hl" style="left:251px;top:641px;width:90px;background:#dcdcdc"></div>
<div class="hl" style="left:343px;top:641px;width:63px;background:#dcdcdc"></div>
<div class="hl" style="left:408px;top:641px;width:63px;background:#dcdcdc"></div>
<div class="hl" style="left:473px;top:641px;width:63px;background:#dcdcdc"></div>
<div class="hl" style="left:538px;top:641px;width:63px;background:#dcdcdc"></div>
<div class="hl" style="left:603px;top:641px;width:102px;background:#dcdcdc"></div>
<div class="hl" style="left:707px;top:641px;width:36px;background:#dcdcdc"></div>
<svg class="abs" style="left:629px;top:619px" width="21" height="18" viewBox="0 0 21 18"><rect x=".5" y=".5" width="18" height="12" rx="1" fill="#fff" stroke="#b4b4b8"/><rect x="13" y="1" width="5" height="5" fill="#e3e3fb"/><rect x="1" y="6" width="17" height="6" fill="#f4ad3d"/><rect x="1" y="6" width="17" height="2.4" fill="#fbc868"/><path d="M6.5 1v11M12.5 1v11" stroke="#000" stroke-opacity=".13" stroke-width="1"/><path d="M15 7v9.8M10.1 12h9.8" stroke="#314958" stroke-width="3.3"/></svg>
<div class="cb" style="top:616px"></div>
<div class="hl" style="left:7px;top:674px;width:242px;background:#dcdcdc"></div>
<div class="hl" style="left:251px;top:674px;width:90px;background:#dcdcdc"></div>
<div class="hl" style="left:343px;top:674px;width:63px;background:#dcdcdc"></div>
<div class="hl" style="left:408px;top:674px;width:63px;background:#dcdcdc"></div>
<div class="hl" style="left:473px;top:674px;width:63px;background:#dcdcdc"></div>
<div class="hl" style="left:538px;top:674px;width:63px;background:#dcdcdc"></div>
<div class="hl" style="left:603px;top:674px;width:102px;background:#dcdcdc"></div>
<div class="hl" style="left:707px;top:674px;width:36px;background:#dcdcdc"></div>
<svg class="abs" style="left:228px;top:650px" width="17" height="16" viewBox="0 0 17 16"><path d="M1.1 0.9h3.1v6.8h6.1v-3.4l5.6 5.1-5.6 5.1v-3.6h-9.2z" fill="#62788a"/></svg>
<svg class="abs" style="left:629px;top:652px" width="21" height="18" viewBox="0 0 21 18"><rect x=".5" y=".5" width="18" height="12" rx="1" fill="#fff" stroke="#b4b4b8"/><rect x="13" y="1" width="5" height="5" fill="#e3e3fb"/><rect x="1" y="6" width="17" height="6" fill="#f4ad3d"/><rect x="1" y="6" width="17" height="2.4" fill="#fbc868"/><path d="M6.5 1v11M12.5 1v11" stroke="#000" stroke-opacity=".13" stroke-width="1"/><path d="M15 7v9.8M10.1 12h9.8" stroke="#314958" stroke-width="3.3"/></svg>
<svg class="abs" style="left:663px;top:653px" width="13" height="13" viewBox="0 0 13 13"><path d="M2.1 1.6l8.8 8.2M10.9 1.6l-8.8 8.2" stroke="#8b0000" stroke-width="3.4" stroke-linecap="butt"/></svg>
<div class="cb" style="top:649px"></div>
<div class="hl" style="left:7px;top:677px;width:242px;background:#314958"></div>
<div class="hl" style="left:251px;top:677px;width:90px;background:#314958"></div>
<div class="hl" style="left:343px;top:677px;width:63px;background:#314958"></div>
<div class="hl" style="left:408px;top:677px;width:63px;background:#314958"></div>
<div class="hl" style="left:473px;top:677px;width:63px;background:#314958"></div>
<div class="hl" style="left:538px;top:677px;width:63px;background:#314958"></div>
<div class="hl" style="left:603px;top:677px;width:102px;background:#314958"></div>
<div class="hl" style="left:707px;top:677px;width:36px;background:#314958"></div>
<div class="hl" style="left:7px;top:708px;width:242px;background:#dcdcdc"></div>
<div class="hl" style="left:251px;top:708px;width:90px;background:#dcdcdc"></div>
<div class="hl" style="left:343px;top:708px;width:63px;background:#dcdcdc"></div>
<div class="hl" style="left:408px;top:708px;width:63px;background:#dcdcdc"></div>
<div class="hl" style="left:473px;top:708px;width:63px;background:#dcdcdc"></div>
<div class="hl" style="left:538px;top:708px;width:63px;background:#dcdcdc"></div>
<div class="hl" style="left:603px;top:708px;width:102px;background:#dcdcdc"></div>
<div class="hl" style="left:707px;top:708px;width:36px;background:#dcdcdc"></div>
<svg class="abs" style="left:629px;top:686px" width="21" height="18" viewBox="0 0 21 18"><rect x=".5" y=".5" width="18" height="12" rx="1" fill="#fff" stroke="#b4b4b8"/><rect x="13" y="1" width="5" height="5" fill="#e3e3fb"/><rect x="1" y="6" width="17" height="6" fill="#f4ad3d"/><rect x="1" y="6" width="17" height="2.4" fill="#fbc868"/><path d="M6.5 1v11M12.5 1v11" stroke="#000" stroke-opacity=".13" stroke-width="1"/><path d="M15 7v9.8M10.1 12h9.8" stroke="#314958" stroke-width="3.3"/></svg>
<div class="cb" style="top:683px"></div>
<svg class="abs" style="left:716px;top:445px" width="18" height="18" viewBox="0 0 18 18"><circle cx="9" cy="8.4" r="6.4" fill="none" stroke="#314958" stroke-width="2.5"/><path d="M4.6 12.8l8.8-8.8" stroke="#314958" stroke-width="2.5"/></svg>
<div class="abs" style="left:5px;top:718px;width:731px;height:27px;background:#314958;border-radius:3px"></div>
<svg class="abs" style="left:402px;top:722px" width="22" height="20" viewBox="0 0 22 20"><rect x="2.1" y="1" width="17.7" height="16.8" rx="3.2" fill="none" stroke="#fff" stroke-width="1.8"/><path d="M10.7 2.4v14M4.4 9.5h12.8" stroke="#fff" stroke-width="2.1"/></svg>
<div class="abs" style="left:794px;top:396px;width:228px;height:24px;border:1px solid #1c7a1c;border-radius:5px;background:#eaf0e6"></div>
<svg class="abs" style="left:975px;top:398px" width="20" height="21" viewBox="0 0 20 21"><path d="M2.1 8.6h3.5v9h-3.5z" fill="#1c6e1c"/><path d="M6.4 9C8.5 7.5 10 5 10.6 3.2C11 2 13.6 2 13.8 4C14 5.6 13.4 7 13 8L16.6 8C18 8 18.2 9.5 17.8 11L17 17C16.8 18.4 16 19 14.8 19L10 19C8.6 19 7.4 18 6.4 17.4Z" fill="#eaf0e6" stroke="#1c6e1c" stroke-width="1.4" stroke-linejoin="round"/></svg>
<div class="box" style="top:434px;height:113px"></div>
<div class="abs" style="left:842px;top:445px;width:93px;height:25px;border:2px solid;border-color:#767676 #e3e3e3 #e3e3e3 #767676;background:#fff;border-radius:1px"></div>
<div class="abs" style="left:868px;top:542px;width:84px;height:1px;background:#314958"></div>
<div class="abs" style="left:960px;top:523px;width:35px;height:18px;border:1px solid #c6c6c6;border-radius:4px;background:#dcdcdc"><svg class="abs" style="left:12px;top:5px" width="12" height="10" viewBox="0 0 12 10"><path d="M1.6 4.6l2.7 2.7 5.5-5.5" fill="none" stroke="#22303b" stroke-width="2.1"/></svg></div>
<div class="box" style="top:555px;height:76px"></div>
<svg class="abs" style="left:999px;top:708px" width="28" height="26" viewBox="0 0 28 26"><path d="M14 2.2Q14.9 1.5 15.8 2.4L25.4 12.9Q26.4 14.2 25.4 15.4L19.4 22.4Q18.4 23.6 17 23.6L11 23.6Q9.6 23.6 8.6 22.4L2.6 15.4Q1.6 14.2 2.6 12.9L12.2 2.4Q13.1 1.5 14 2.2Z" fill="#c9c9c9"/><path d="M7.4 14.6l7.5-7M10.4 17.8l4.8-4.9" stroke="#fff" stroke-width="2" stroke-linecap="round"/><circle cx="13.7" cy="20.2" r="1.4" fill="#fff"/></svg>
<span class="t" style="left:17.9px;top:398.5px;line-height:20px;font-size:13.4px;color:#e88d0a;letter-spacing:-0.038px;font-weight:bold;">Income</span>
<span class="t" style="left:98.2px;top:398.5px;line-height:20px;font-size:13.4px;color:#314958;letter-spacing:-0.419px;font-weight:bold;">Expenses</span>
<span class="t" style="left:190.2px;top:398.5px;line-height:20px;font-size:13.4px;color:#314958;letter-spacing:-0.143px;font-weight:bold;">Savings / Investments</span>
<span class="t" style="left:361.5px;top:398.5px;line-height:20px;font-size:13.4px;color:#314958;letter-spacing:-1.005px;font-weight:bold;">Goals</span>
<span class="t" style="left:428.5px;top:398.5px;line-height:20px;font-size:13.4px;color:#314958;letter-spacing:0.110px;font-weight:bold;">History</span>
<span class="t" style="left:195.6px;top:483.5px;line-height:20px;font-size:13.6px;color:#314958;letter-spacing:-0.319px;font-weight:bold;">Income</span>
<span class="t" style="left:275.7px;top:483.0px;line-height:20px;font-size:12.2px;color:#24282d;letter-spacing:0.000px;transform:scaleX(0.8778);transform-origin:50% 0;">150000</span>
<span class="t" style="left:367.7px;top:483.0px;line-height:20px;font-size:12.2px;color:#24282d;letter-spacing:0.000px;transform:scaleX(0.8774);transform-origin:50% 0;">20</span>
<span class="t" style="left:436.1px;top:483.0px;line-height:20px;font-size:12.2px;color:#24282d;letter-spacing:0.000px;transform:scaleX(0.8774);transform-origin:50% 0;">0</span>
<span class="t" style="left:497.7px;top:483.0px;line-height:20px;font-size:12.2px;color:#24282d;letter-spacing:0.000px;transform:scaleX(0.8774);transform-origin:50% 0;">38</span>
<span class="t" style="left:562.7px;top:483.0px;line-height:20px;font-size:12.2px;color:#24282d;letter-spacing:0.000px;transform:scaleX(0.8774);transform-origin:50% 0;">45</span>
<span class="t" style="left:160.8px;top:515.0px;line-height:20px;font-size:12px;color:#717b83;letter-spacing:-0.229px;">Max Income</span>
<span class="t" style="left:275.7px;top:516.0px;line-height:20px;font-size:12.2px;color:#24282d;letter-spacing:0.000px;transform:scaleX(0.8778);transform-origin:50% 0;">170000</span>
<span class="t" style="left:367.7px;top:516.0px;line-height:20px;font-size:12.2px;color:#24282d;letter-spacing:0.000px;transform:scaleX(0.8774);transform-origin:50% 0;">20</span>
<span class="t" style="left:429.0px;top:516.0px;line-height:20px;font-size:12.2px;color:#24282d;letter-spacing:0.000px;transform:scaleX(0.9231);transform-origin:50% 0;">-2.5</span>
<span class="t" style="left:497.7px;top:516.0px;line-height:20px;font-size:12.2px;color:#24282d;letter-spacing:0.000px;transform:scaleX(0.8774);transform-origin:50% 0;">46</span>
<span class="t" style="left:562.7px;top:516.0px;line-height:20px;font-size:12.2px;color:#24282d;letter-spacing:0.000px;transform:scaleX(0.8774);transform-origin:50% 0;">50</span>
<span class="t" style="left:131.1px;top:548.0px;line-height:20px;font-size:12px;color:#717b83;letter-spacing:0.242px;">Early Retirement</span>
<span class="t" style="left:279.1px;top:549.0px;line-height:20px;font-size:12.2px;color:#24282d;letter-spacing:0.000px;transform:scaleX(0.8778);transform-origin:50% 0;">80000</span>
<span class="t" style="left:367.7px;top:549.0px;line-height:20px;font-size:12.2px;color:#24282d;letter-spacing:0.000px;transform:scaleX(0.8774);transform-origin:50% 0;">20</span>
<span class="t" style="left:436.1px;top:549.0px;line-height:20px;font-size:12.2px;color:#24282d;letter-spacing:0.000px;transform:scaleX(0.8774);transform-origin:50% 0;">0</span>
<span class="t" style="left:497.7px;top:549.0px;line-height:20px;font-size:12.2px;color:#24282d;letter-spacing:0.000px;transform:scaleX(0.8774);transform-origin:50% 0;">51</span>
<span class="t" style="left:562.7px;top:549.0px;line-height:20px;font-size:12.2px;color:#24282d;letter-spacing:0.000px;transform:scaleX(0.8774);transform-origin:50% 0;">67</span>
<span class="t" style="left:144.6px;top:581.0px;line-height:20px;font-size:12px;color:#717b83;letter-spacing:0.009px;">Social Security</span>
<span class="t" style="left:279.1px;top:582.0px;line-height:20px;font-size:12.2px;color:#24282d;letter-spacing:0.000px;transform:scaleX(0.8778);transform-origin:50% 0;">32500</span>
<span class="t" style="left:367.7px;top:582.0px;line-height:20px;font-size:12.2px;color:#24282d;letter-spacing:0.000px;transform:scaleX(0.8774);transform-origin:50% 0;">10</span>
<span class="t" style="left:436.1px;top:582.0px;line-height:20px;font-size:12.2px;color:#24282d;letter-spacing:0.000px;transform:scaleX(0.8774);transform-origin:50% 0;">0</span>
<span class="t" style="left:497.7px;top:582.0px;line-height:20px;font-size:12.2px;color:#24282d;letter-spacing:0.000px;transform:scaleX(0.8774);transform-origin:50% 0;">68</span>
<span class="t" style="left:562.7px;top:582.0px;line-height:20px;font-size:12.2px;color:#24282d;letter-spacing:0.000px;transform:scaleX(0.8774);transform-origin:50% 0;">90</span>
<span class="t" style="left:146.1px;top:616.5px;line-height:20px;font-size:13.6px;color:#314958;letter-spacing:-0.414px;font-weight:bold;">Spouse Income</span>
<span class="t" style="left:279.1px;top:616.0px;line-height:20px;font-size:12.2px;color:#24282d;letter-spacing:0.000px;transform:scaleX(0.8778);transform-origin:50% 0;">28000</span>
<span class="t" style="left:367.7px;top:616.0px;line-height:20px;font-size:12.2px;color:#24282d;letter-spacing:0.000px;transform:scaleX(0.8774);transform-origin:50% 0;">20</span>
<span class="t" style="left:436.1px;top:616.0px;line-height:20px;font-size:12.2px;color:#24282d;letter-spacing:0.000px;transform:scaleX(0.8774);transform-origin:50% 0;">0</span>
<span class="t" style="left:497.7px;top:616.0px;line-height:20px;font-size:12.2px;color:#24282d;letter-spacing:0.000px;transform:scaleX(0.8774);transform-origin:50% 0;">33</span>
<span class="t" style="left:562.7px;top:616.0px;line-height:20px;font-size:12.2px;color:#24282d;letter-spacing:0.000px;transform:scaleX(0.8774);transform-origin:50% 0;">60</span>
<span class="t" style="left:102.1px;top:648.0px;line-height:20px;font-size:12px;color:#717b83;letter-spacing:-0.067px;">Spouse Social Security</span>
<span class="t" style="left:279.1px;top:649.0px;line-height:20px;font-size:12.2px;color:#24282d;letter-spacing:0.000px;transform:scaleX(0.8778);transform-origin:50% 0;">12000</span>
<span class="t" style="left:367.7px;top:649.0px;line-height:20px;font-size:12.2px;color:#24282d;letter-spacing:0.000px;transform:scaleX(0.8774);transform-origin:50% 0;">10</span>
<span class="t" style="left:436.1px;top:649.0px;line-height:20px;font-size:12.2px;color:#24282d;letter-spacing:0.000px;transform:scaleX(0.8774);transform-origin:50% 0;">0</span>
<span class="t" style="left:497.7px;top:649.0px;line-height:20px;font-size:12.2px;color:#24282d;letter-spacing:0.000px;transform:scaleX(0.8774);transform-origin:50% 0;">61</span>
<span class="t" style="left:562.7px;top:649.0px;line-height:20px;font-size:12.2px;color:#24282d;letter-spacing:0.000px;transform:scaleX(0.8774);transform-origin:50% 0;">90</span>
<span class="t" style="left:146.8px;top:683.5px;line-height:20px;font-size:13.6px;color:#314958;letter-spacing:-0.726px;font-weight:bold;">Bonus and Misc</span>
<span class="t" style="left:279.1px;top:683.0px;line-height:20px;font-size:12.2px;color:#24282d;letter-spacing:0.000px;transform:scaleX(0.8778);transform-origin:50% 0;">85000</span>
<span class="t" style="left:371.1px;top:683.0px;line-height:20px;font-size:12.2px;color:#24282d;letter-spacing:0.000px;transform:scaleX(0.8774);transform-origin:50% 0;">0</span>
<span class="t" style="left:436.1px;top:683.0px;line-height:20px;font-size:12.2px;color:#24282d;letter-spacing:0.000px;transform:scaleX(0.8774);transform-origin:50% 0;">0</span>
<span class="t" style="left:497.7px;top:683.0px;line-height:20px;font-size:12.2px;color:#24282d;letter-spacing:0.000px;transform:scaleX(0.8774);transform-origin:50% 0;">46</span>
<span class="t" style="left:562.7px;top:683.0px;line-height:20px;font-size:12.2px;color:#24282d;letter-spacing:0.000px;transform:scaleX(0.8774);transform-origin:50% 0;">46</span>
<span class="t" style="left:210.7px;top:445.5px;line-height:20px;font-size:13px;color:#314958;letter-spacing:-0.041px;font-weight:bold;text-decoration:underline">Name</span>
<span class="t" style="left:271.2px;top:445.5px;line-height:20px;font-size:13px;color:#314958;letter-spacing:0.078px;font-weight:bold;text-decoration:underline">Amount</span>
<span class="t" style="left:355.7px;top:445.5px;line-height:20px;font-size:13px;color:#314958;letter-spacing:0.298px;font-weight:bold;text-decoration:underline">% Tax</span>
<span class="t" style="left:418.0px;top:445.5px;line-height:20px;font-size:13px;color:#314958;letter-spacing:0.346px;font-weight:bold;text-decoration:underline">% Incr.</span>
<span class="t" style="left:489.2px;top:437.5px;line-height:20px;font-size:13px;color:#314958;letter-spacing:0.494px;font-weight:bold;text-decoration:underline">Start</span>
<span class="t" style="left:493.7px;top:453.5px;line-height:20px;font-size:13px;color:#314958;letter-spacing:-0.781px;font-weight:bold;text-decoration:underline">Age</span>
<span class="t" style="left:544.1px;top:445.5px;line-height:20px;font-size:13px;color:#314958;letter-spacing:-0.075px;font-weight:bold;text-decoration:underline">End Age</span>
<span class="t" style="left:329.5px;top:721.0px;line-height:20px;font-size:12.6px;color:#fff;letter-spacing:-0.024px;-webkit-text-stroke:.3px #fff">Add Income</span>
<span class="t" style="left:821.2px;top:399.5px;line-height:20px;font-size:13.4px;color:#1c6e1c;letter-spacing:-0.016px;font-weight:bold;">A Successful Trajectory</span>
<span class="t" style="left:800.5px;top:449.5px;line-height:20px;font-size:13.4px;color:#314958;letter-spacing:0.054px;font-weight:bold;">Date:</span>
<span class="t" style="left:846.6px;top:450.0px;line-height:20px;font-size:12.7px;color:#222;letter-spacing:-0.100px;">12/15/2015</span>
<span class="t" style="left:820.4px;top:476.0px;line-height:20px;font-size:12.5px;color:#314958;letter-spacing:0.282px;">Trajectory:</span>
<span class="t" style="left:886.0px;top:475.0px;line-height:20px;font-size:14.2px;color:#314958;letter-spacing:0.287px;font-weight:bold;text-decoration:underline">$1,201,531</span>
<span class="t" style="left:820.4px;top:498.0px;line-height:20px;font-size:12.5px;color:#1c6e1c;letter-spacing:-0.412px;-webkit-text-stroke:.25px #1c6e1c">Progress:</span>
<span class="t" style="left:875.3px;top:497.0px;line-height:20px;font-size:14.2px;color:#1c6e1c;letter-spacing:0.220px;font-weight:bold;">$1,186,306</span>
<span class="t" style="left:953.9px;top:498.0px;line-height:20px;font-size:11px;color:#1c6e1c;letter-spacing:-0.177px;-webkit-text-stroke:.2px #1c6e1c">(-1.3%)</span>
<span class="t" style="left:820.4px;top:521.0px;line-height:20px;font-size:12.5px;color:#1c6e1c;letter-spacing:-0.097px;-webkit-text-stroke:.25px #1c6e1c">Update:</span>
<span class="t" style="left:869.8px;top:521.0px;line-height:20px;font-size:12.2px;color:#a9a9a9;letter-spacing:0.228px;-webkit-text-stroke:.35px #a9a9a9">(9 days old)</span>
<span class="t" style="left:800.5px;top:564.5px;line-height:20px;font-size:13.4px;color:#314958;letter-spacing:0.185px;font-weight:bold;">At Age: 90</span>
<span class="t" style="left:820.4px;top:583.0px;line-height:20px;font-size:12.5px;color:#314958;letter-spacing:0.282px;">Trajectory:</span>
<span class="t" style="left:886.0px;top:582.0px;line-height:20px;font-size:14.2px;color:#314958;letter-spacing:0.173px;font-weight:bold;">$102,081</span>
<span class="t" style="left:820.4px;top:605.0px;line-height:20px;font-size:12.5px;color:#1c6e1c;letter-spacing:-0.412px;-webkit-text-stroke:.25px #1c6e1c">Progress:</span>
<span class="t" style="left:875.3px;top:604.0px;line-height:20px;font-size:14.2px;color:#1c6e1c;letter-spacing:0.184px;font-weight:bold;">$12,759</span>
<div id="edge" class="abs"></div>
</body>
</html>
